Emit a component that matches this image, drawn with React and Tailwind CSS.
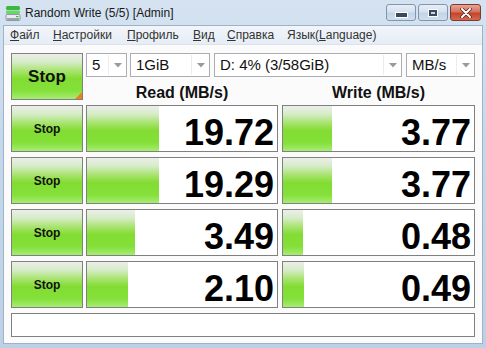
import React from "react";

const font = { fontFamily: '"Liberation Sans", Arial, sans-serif' };

const greenFill =
  "bg-[linear-gradient(to_bottom,#eceee9_0%,#d6ecc8_18%,#a2e264_40%,#82dc32_55%,#84e03a_82%,#a8ec74_100%)]";

const rows = [
  { read: "19.72", readBar: 72, write: "3.77", writeBar: 49 },
  { read: "19.29", readBar: 72, write: "3.77", writeBar: 49 },
  { read: "3.49", readBar: 48, write: "0.48", writeBar: 20 },
  { read: "2.10", readBar: 41, write: "0.49", writeBar: 21 },
];

const menu = [
  { first: "Ф", rest: "айл", w: "w-[43px]" },
  { first: "Н", rest: "астройки", w: "w-[74px]" },
  { first: "П", rest: "рофиль", w: "w-[66px]" },
  { first: "В", rest: "ид", w: "w-[34px]" },
  { first: "С", rest: "правка", w: "w-[60px]" },
];

const Arrow = () => (
  <svg width="8" height="5" viewBox="0 0 8 5">
    <path d="M0 0 L8 0 L4 4.5 Z" fill="#9a9a9a" />
  </svg>
);

const Dropdown = ({ value, width }) => (
  <div className={`${width} h-[24px] border border-[#abadb3] bg-white flex items-center`}>
    <span className="flex-1 pl-[5px] text-[15px] text-[#111]">{value}</span>
    <div className="w-[18px] h-[20px] border-l border-[#ececec] flex items-center justify-center">
      <Arrow />
    </div>
  </div>
);

const StopButton = ({ big }) => (
  <div
    className={`relative w-[72px] h-[47px] border border-[#808080] ${greenFill} flex items-center justify-center font-bold text-[#111] ${
      big ? "text-[17px]" : "text-[12px]"
    }`}
  >
    Stop
    {big && (
      <svg className="absolute right-0 bottom-0" width="7" height="7" viewBox="0 0 7 7">
        <path d="M7 0 L7 7 L0 7 Z" fill="#f0801c" />
      </svg>
    )}
  </div>
);

const ValueBox = ({ value, bar, width }) => (
  <div className={`${width} h-[47px] border border-[#808080] bg-white flex items-center relative`}>
    <div className={`h-full ${greenFill}`} style={{ width: bar }} />
    <span className="absolute right-[3px] top-[9px] text-[36px] font-bold leading-none text-black">
      {value}
    </span>
  </div>
);

const TitleIcon = () => (
  <svg width="16" height="16" viewBox="0 0 16 16">
    <rect x="1" y="1" width="14" height="4" rx="1.5" fill="#3cb83c" />
    <rect x="1" y="5.5" width="14" height="3.5" rx="1.2" fill="#6cd46c" />
    <rect x="1" y="9.5" width="14" height="6" rx="1" fill="#e8ecef" stroke="#7a8590" strokeWidth="0.8" />
    <rect x="2" y="13" width="12" height="2" fill="#9aa4ae" />
    <rect x="11" y="11" width="2.5" height="1.2" fill="#3cb83c" />
  </svg>
);

const WinButton = ({ kind }) => {
  if (kind === "close") {
    return (
      <div className="w-[31px] h-[17px] rounded-[3px] border border-[#7a3a34] bg-[linear-gradient(to_bottom,#e8a493_0%,#d6735e_45%,#c4442a_55%,#d46a50_100%)] flex items-center justify-center">
        <svg width="12" height="10" viewBox="0 0 12 10">
          <path d="M2 1 L10 9 M10 1 L2 9" stroke="#4a2020" strokeWidth="3.4" strokeLinecap="round" />
          <path d="M2 1 L10 9 M10 1 L2 9" stroke="#ffffff" strokeWidth="2" strokeLinecap="round" />
        </svg>
      </div>
    );
  }
  return (
    <div className="w-[30px] h-[17px] rounded-[3px] border border-[#8096b0] bg-[linear-gradient(to_bottom,#e6eef7_0%,#d6e2ef_45%,#c3d4e6_55%,#d0dfee_100%)] flex items-center justify-center">
      {kind === "min" ? (
        <div className="w-[11px] h-[4px] mt-[5px] bg-[#3a4a5c] border border-white box-content" />
      ) : (
        <div className="w-[8px] h-[6px] border-[2px] border-[#3a4a5c] outline outline-1 outline-white" />
      )}
    </div>
  );
};

export default function App() {
  return (
    <div
      className="w-[486px] h-[348px] bg-[linear-gradient(to_bottom,#d5e3f1_0%,#c5d8eb_40%,#bcd1e6_100%)] flex flex-col overflow-hidden"
      style={font}
    >
      {/* title bar */}
      <div className="h-[25px] flex items-center pl-[5px] pr-[5px] shrink-0">
        <TitleIcon />
        <span className="ml-[4px] text-[12px] text-[#1a1a1a]">Random Write (5/5) [Admin]</span>
        <div className="ml-auto flex items-center gap-[2px]">
          <WinButton kind="min" />
          <WinButton kind="max" />
          <WinButton kind="close" />
        </div>
      </div>

      {/* window body */}
      <div className="flex-1 mx-[3px] mb-[4px] border border-[#9fb2c6] bg-[#fbfbfb] flex flex-col">
        <div className="h-[19px] bg-[linear-gradient(to_bottom,#f2f5fa_0%,#e6edf6_100%)] border-b border-[#dde3ea] flex items-center pl-[6px] text-[12px] text-[#333] shrink-0">
          {menu.map((m) => (
            <span key={m.first} className={m.w}>
              <span className="underline">{m.first}</span>
              {m.rest}
            </span>
          ))}
          <span>
            Язык(<span className="underline">L</span>anguage)
          </span>
        </div>

        <div className="flex flex-col pl-[7px] pt-[8px] gap-[5px]">
          {/* top row */}
          <div className="flex gap-[3px]">
            <StopButton big />
            <div className="flex flex-col">
              <div className="flex">
                <Dropdown value="5" width="w-[41px]" />
                <div className="w-[3px]" />
                <Dropdown value="1GiB" width="w-[80px]" />
                <div className="w-[4px]" />
                <Dropdown value="D: 4% (3/58GiB)" width="w-[188px]" />
                <div className="w-[4px]" />
                <Dropdown value="MB/s" width="w-[69px]" />
              </div>
              <div className="flex gap-[4px] h-[23px] items-center pt-[9px]">
                <div className="w-[192px] text-center text-[16px] font-bold text-[#111]">Read (MB/s)</div>
                <div className="w-[193px] text-center text-[16px] font-bold text-[#111]">Write (MB/s)</div>
              </div>
            </div>
          </div>

          {rows.map((r, i) => (
            <div key={i} className="flex gap-[3px]">
              <StopButton />
              <div className="flex gap-[4px]">
                <ValueBox value={r.read} bar={r.readBar} width="w-[192px]" />
                <ValueBox value={r.write} bar={r.writeBar} width="w-[193px]" />
              </div>
            </div>
          ))}

          <div className="w-[464px] h-[24px] border border-[#808080] bg-white" />
        </div>
      </div>
    </div>
  );
}
